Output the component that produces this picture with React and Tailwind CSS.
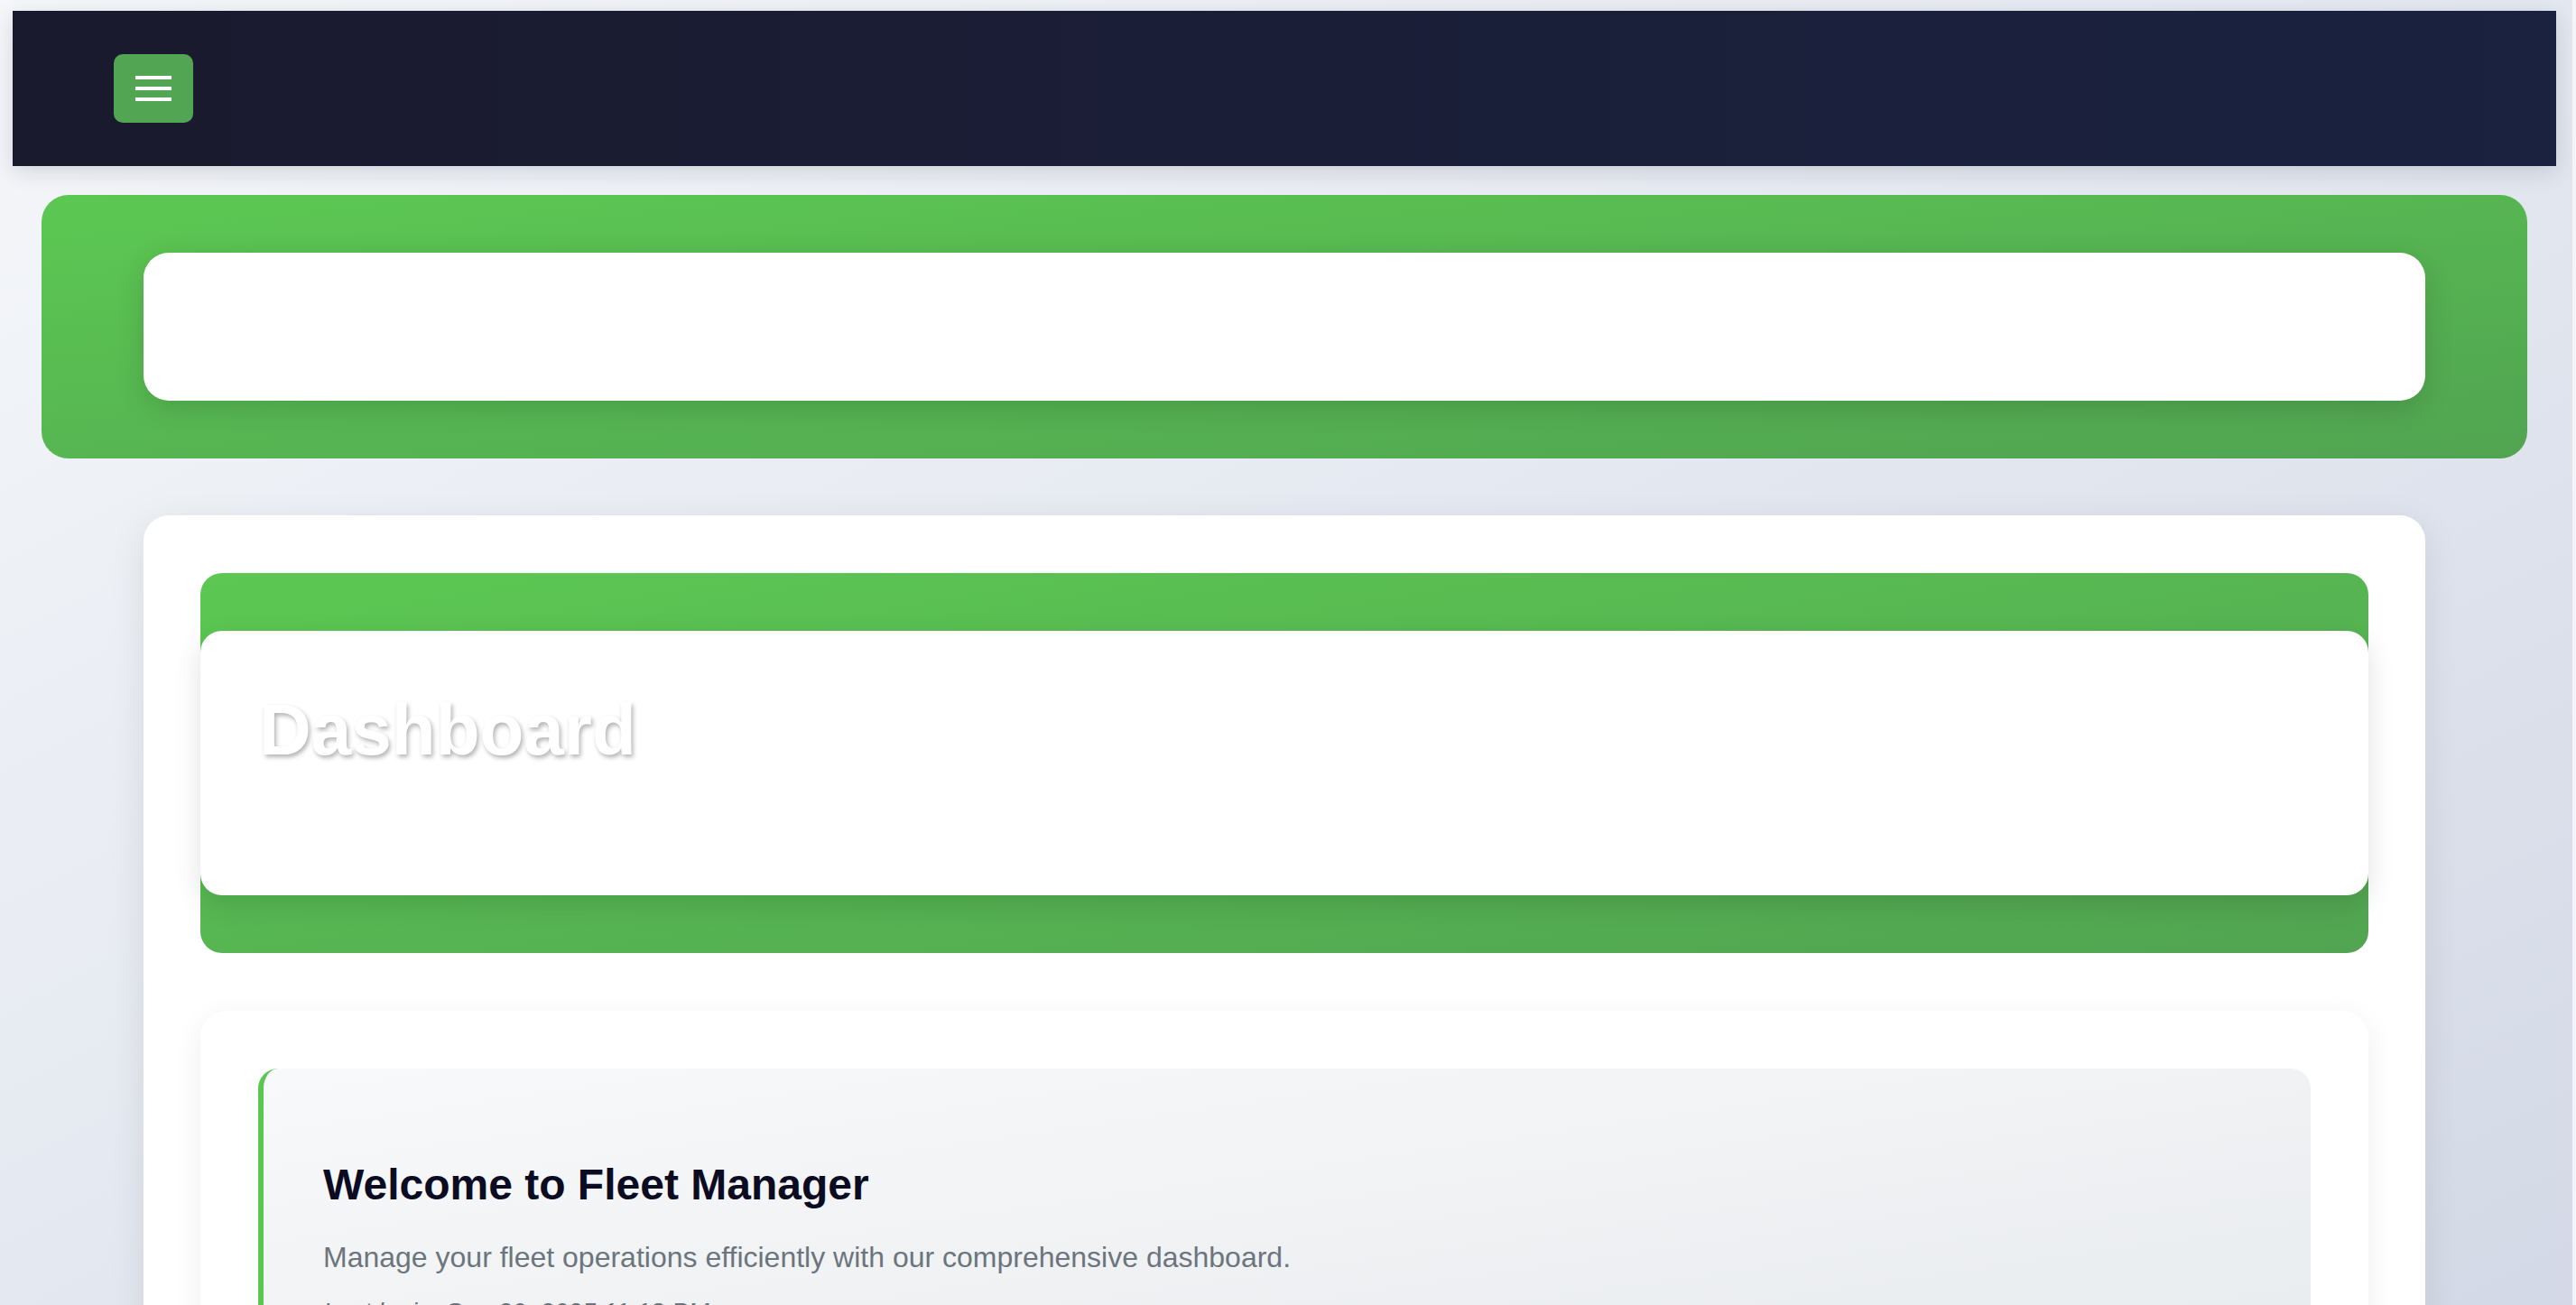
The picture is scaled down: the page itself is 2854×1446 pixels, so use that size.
import { useState } from "react";

const sans = "font-['Liberation_Sans',Arial,sans-serif]";

function TopBar({ onToggleMenu }) {
  return (
    <header className="ml-[14px] mr-[18px] flex h-[172px] items-center bg-gradient-to-r from-[#1a1a2e] to-[#1a2240] pl-[112px] shadow-[0_6px_24px_rgba(20,24,50,0.14)]">
      <button
        onClick={onToggleMenu}
        className="flex h-[76px] w-[88px] flex-col items-center justify-center gap-[8px] rounded-[10px] bg-[#52a552]"
        aria-label="Toggle menu"
      >
        <span className="block h-[4px] w-[40px] bg-white" />
        <span className="block h-[4px] w-[40px] bg-white" />
        <span className="block h-[4px] w-[40px] bg-white" />
      </button>
    </header>
  );
}

function Banner() {
  return (
    <section className="ml-[46px] mr-[50px] mt-[32px] rounded-[30px] bg-gradient-to-br from-[#5cc852] to-[#51a451] px-[113px] py-[64px]">
      <div className="h-[164px] rounded-[28px] bg-white shadow-[0_8px_32px_rgba(0,0,0,0.14)]" />
    </section>
  );
}

function WelcomeCard() {
  return (
    <div className="mt-[64px] rounded-[30px] bg-white px-[64px] pt-[64px] shadow-[0_8px_32px_rgba(0,0,0,0.07)]">
      <div className="rounded-[22px] border-l-[6px] border-[#5cc750] bg-gradient-to-br from-[#f8f9fa] to-[#e8ebee] pb-[40px] pl-[66px] pt-[101px]">
        <h2 className="text-[48px] font-bold leading-[56px] text-[#0b0b22]">
          Welcome to Fleet Manager
        </h2>
        <p className="mt-[34px] text-[32px] leading-[37px] text-[#6c757d]">
          Manage your fleet operations efficiently with our comprehensive dashboard.
        </p>
        <p className="mt-[26px] text-[28px] italic leading-[32px] text-[#6c757d]">
          Last login: Sep 30, 2025 11:18 PM
        </p>
      </div>
    </div>
  );
}

export default function App() {
  const [menuOpen, setMenuOpen] = useState(false);

  return (
    <div className={`${sans} flex h-screen w-full overflow-hidden`}>
      <div className="min-w-0 flex-1 bg-gradient-to-br from-[#f5f7fa] to-[#d3d9e6] pt-[12px]">
        <TopBar onToggleMenu={() => setMenuOpen((open) => !open)} />
        <Banner />

        <main className="ml-[159px] mr-[163px] mt-[63px] rounded-[28px] bg-white px-[63px] pt-[64px] shadow-[0_10px_40px_rgba(0,0,0,0.09)]">
          <div className="rounded-[24px] bg-gradient-to-br from-[#5cc852] to-[#51a451] py-[64px]">
            <div className="h-[293px] rounded-[24px] bg-white pl-[65px] pt-[64px] shadow-[0_10px_30px_rgba(0,0,0,0.12)]">
              <h1 className="text-[80px] font-bold leading-[92px] text-white [text-shadow:2px_3px_5px_rgba(0,0,0,0.3)]">
                Dashboard
              </h1>
            </div>
          </div>

          <WelcomeCard />
        </main>
      </div>
      <div className="w-[4px] bg-[#f3f4f7]" />
    </div>
  );
}
